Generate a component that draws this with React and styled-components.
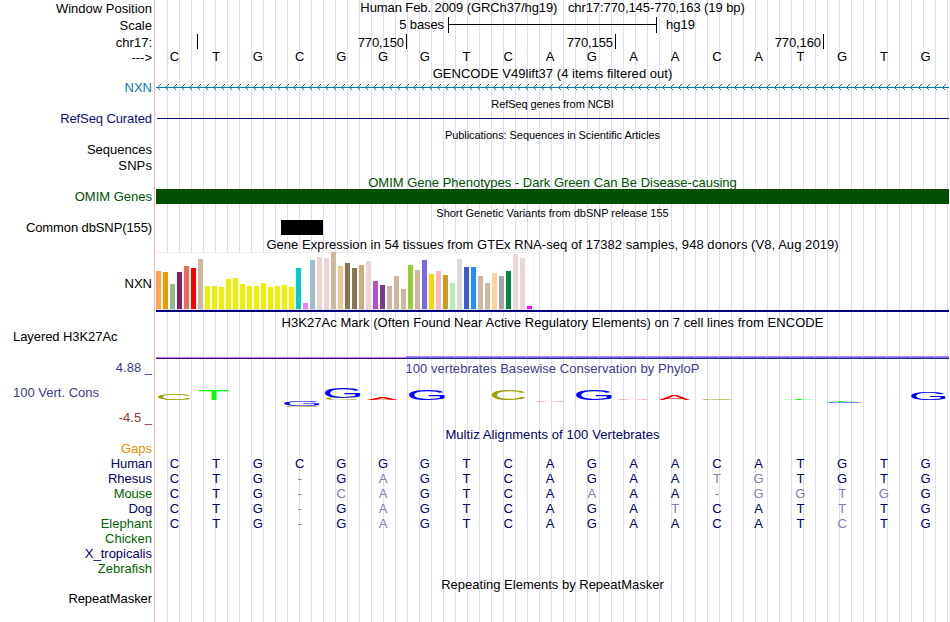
import React from 'react'
import styled, { createGlobalStyle } from 'styled-components'

const BASES = 'CTGCGGGTCAGAACATGTG'

const labels = [
  { text: 'Window Position', h: 17 },
  { text: 'Scale', h: 17 },
  { text: 'chr17:', h: 15 },
  { text: '--->', h: 30 },
  { text: 'NXN', h: 31, color: '#0c78b4' },
  { text: 'RefSeq Curated', h: 31, color: '#0c0c78', ls: -0.1 },
  { text: 'Sequences', h: 16 },
  { text: 'SNPs', h: 31, ls: 0.1 },
  { text: 'OMIM Genes', h: 31, color: '#005000' },
  { text: 'Common dbSNP(155)', h: 56, ls: -0.11 },
  { text: 'NXN', h: 53 },
  { text: 'Layered H3K27Ac', h: 31, left: true, ls: -0.07 },
  { text: '4.88 _', h: 25, color: '#3c3c8c' },
  { text: '100 Vert. Cons', h: 25, color: '#3c3c8c', left: true },
  { text: '-4.5 _', h: 31, color: '#8c3c3c' },
  { text: 'Gaps', h: 15, color: '#e68c00' },
  { text: 'Human', h: 15, color: '#000064', ls: -0.15 },
  { text: 'Rhesus', h: 15, color: '#000064' },
  { text: 'Mouse', h: 15, color: '#006400', ls: -0.15 },
  { text: 'Dog', h: 15, color: '#000064', ls: -0.15 },
  { text: 'Elephant', h: 15, color: '#006400' },
  { text: 'Chicken', h: 15, color: '#006400' },
  { text: 'X_tropicalis', h: 15, color: '#000064' },
  { text: 'Zebrafish', h: 30, color: '#006400' },
  { text: 'RepeatMasker', h: 31, ls: -0.08 },
]

const species = [
  BASES,
  'CTG-GAGTCAGAATGTGTG',
  'CTG-CAGTCAAAA-GGTGG',
  'CTG-GAGTCAGATCATTTG',
  'CTG-GAGTCAGAACATCTG',
]

const tissues = [
  [38, '#ffa54f'], [37, '#ee9a00'], [25, '#8fbc8f'], [37, '#8b1c62'], [43, '#ee6a50'],
  [41, '#ff0000'], [50, '#cdb79e'], [23, '#eeee00'], [23, '#eeee00'], [22, '#eeee00'],
  [30, '#eeee00'], [31, '#eeee00'], [25, '#eeee00'], [23, '#eeee00'], [23, '#eeee00'],
  [26, '#eeee00'], [22, '#eeee00'], [23, '#eeee00'], [24, '#eeee00'], [22, '#eeee00'],
  [41, '#00cdcd'], [6, '#ee82ee'], [49, '#9ac0cd'], [52, '#eed5d2'], [51, '#eed5d2'],
  [57, '#cdb79e'], [43, '#eec591'], [46, '#8b7355'], [41, '#8b7355'], [44, '#cdaa7d'],
  [48, '#eed5d2'], [28, '#b452cd'], [24, '#7a378b'], [23, '#cdb79e'], [33, '#cdb79e'],
  [20, '#cdb79e'], [44, '#9acd32'], [39, '#cdb79e'], [49, '#7a67ee'], [35, '#ffd700'],
  [38, '#ffb6c1'], [34, '#cd9b1d'], [26, '#b4eeb4'], [50, '#d9d9d9'], [42, '#3a5fcd'],
  [42, '#1e90ff'], [33, '#cdb79e'], [26, '#cdb79e'], [36, '#ffd39b'], [33, '#a6a6a6'],
  [38, '#008b45'], [55, '#eed5d2'], [51, '#eed5d2'], [3, '#ff00ff'],
]

// ink box of each letter at font-size 100: left, right, bottom overshoot, top
const INK = {
  A: [0.2, 66.5, 0, 68.8],
  C: [5, 67.7, 1, 69.8],
  G: [5, 70.5, 1, 69.8],
  T: [2.2, 58.9, 0, 68.8],
}
const LOGO_COLOR = { A: '#ff0000', C: '#a0a000', G: '#0000ff', T: '#00ff00' }

// letter, left, right, top, bottom inside the conservation track
const logo = [
  ['C', 2, 35, 17.5, 24],
  ['T', 43, 73, 14, 24],
  ['G', 128, 163, 25, 30],
  ['C', 128, 163, 30, 30.6],
  ['G', 169, 204, 12, 22],
  ['C', 170, 201, 22, 24],
  ['A', 211, 242, 21, 24],
  ['G', 253, 288.5, 14, 24],
  ['C', 336, 369, 14, 24],
  ['A', 378, 409, 25, 26],
  ['G', 420, 455.5, 14, 24],
  ['A', 461, 493, 23, 24],
  ['A', 503, 534, 19, 24],
  ['C', 546, 577, 23.3, 24],
  ['T', 628, 658, 23, 24],
  ['T', 670, 700, 25, 26],
  ['G', 671, 705, 26, 27],
  ['G', 755, 789, 16, 24],
]

const LogoLetter = ({ data }) => {
  const [ch, x0, x1, y0, y1] = data
  const [l, r, b, t] = INK[ch]
  const sx = (x1 - x0) / (r - l)
  const sy = (y1 - y0) / (t + b)
  return (
    <StLogoText
      fill={LOGO_COLOR[ch]}
      transform={`translate(${x0 - l * sx} ${y1 - b * sy}) scale(${sx} ${sy})`}
    >
      {ch}
    </StLogoText>
  )
}

const arrows = Array.from({ length: 99 }, (_, i) => {
  const x = Math.round(1 + i * 8.01)
  return `M${x + 3.5} 0.5L${x + 0.5} 3.5L${x + 3.5} 6.5`
}).join('')

const App = () => {
  return (
    <>
      <GlobalStyle />
      <StBrowser>
        <StLabels>
          {labels.map((l, i) => (
            <StLabel key={i} $h={l.h} $color={l.color} $left={l.left} $ls={l.ls}>
              {l.text}
            </StLabel>
          ))}
        </StLabels>
        <StTracks>
          <StTitle $h={17} $ls={-0.085}>
            Human Feb. 2009 (GRCh37/hg19) &nbsp; chr17:770,145-770,163 (19 bp)
          </StTitle>
          <StScale>
            <StScaleText>5 bases</StScaleText>
            <StScaleBar />
            <span>hg19</span>
          </StScale>
          <StRuler>
            <StTick $w={42} />
            <StTick $w={209}>770,150</StTick>
            <StTick $w={209}>770,155</StTick>
            <StTick $w={208}>770,160</StTick>
          </StRuler>
          <StBaseRow $h={17}>
            {BASES.split('').map((b, i) => (
              <StBase key={i}>{b}</StBase>
            ))}
          </StBaseRow>
          <StTitle $h={18} $ls={0.03}>GENCODE V49lift37 (4 items filtered out)</StTitle>
          <StGene width='793' height='7'>
            <path d='M0 3.5H793' />
            <path d={arrows} />
          </StGene>
          <StSmallTitle $h={20} $ls={-0.08}>RefSeq genes from NCBI</StSmallTitle>
          <StRefSeqLine />
          <StSmallTitle $h={46} $ls={-0.055}>
            Publications: Sequences in Scientific Articles
          </StSmallTitle>
          <StTitle $h={14} $color='#005000'>
            OMIM Gene Phenotypes - Dark Green Can Be Disease-causing
          </StTitle>
          <StOmimBar />
          <StSmallTitle $h={13} $ls={-0.02}>
            Short Genetic Variants from dbSNP release 155
          </StSmallTitle>
          <StSnp />
          <StTitle $h={15} $ls={0.055}>
            Gene Expression in 54 tissues from GTEx RNA-seq of 17382 samples, 948 donors (V8, Aug 2019)
          </StTitle>
          <StGtex>
            <StBars>
              {tissues.map(([h, c], i) => (
                <StBar key={i} $h={h} $c={c} />
              ))}
            </StBars>
          </StGtex>
          <StTitle $h={41} $ls={0.052}>
            H3K27Ac Mark (Often Found Near Active Regulatory Elements) on 7 cell lines from ENCODE
          </StTitle>
          <StSignal>
            <StSignalLow />
            <StSignalHigh />
          </StSignal>
          <StTitle $h={15} $color='#3c3c8c' $ls={0.04}>
            100 vertebrates Basewise Conservation by PhyloP
          </StTitle>
          <StLogo width='793' height='51'>
            {logo.map((d, i) => (
              <LogoLetter key={i} data={d} />
            ))}
          </StLogo>
          <StTitle $h={29} $color='#000064' $ls={0.09}>
            Multiz Alignments of 100 Vertebrates
          </StTitle>
          {species.map((row, n) => (
            <StBaseRow key={n} $h={15}>
              {row.split('').map((b, i) => (
                <StBase key={i} $color={b === BASES[i] ? '#000064' : '#8080b2'}>
                  {b}
                </StBase>
              ))}
            </StBaseRow>
          ))}
          <StRepeatTitle $h={15}>Repeating Elements by RepeatMasker</StRepeatTitle>
        </StTracks>
      </StBrowser>
    </>
  )
}

export default App

const GlobalStyle = createGlobalStyle`
  body {
    margin: 0;
    background: #fff;
    overflow: hidden;
  }
`

const StBrowser = styled.div`
  display: flex;
  width: 949px;
  height: 622px;
  overflow: hidden;
  color: #000;
  font-family: 'Liberation Sans', Arial, sans-serif;
  font-size: 13px;
  line-height: 15px;
  white-space: nowrap;
`

const StLabels = styled.div`
  box-sizing: border-box;
  width: 155px;
  flex: none;
  padding: 1px 2px 0 13px;
  border-right: 1px solid #ffb4b4;
`

const StLabel = styled.div`
  height: ${(p) => p.$h}px;
  color: ${(p) => p.$color || '#000'};
  letter-spacing: ${(p) => p.$ls || 0}px;
  text-align: ${(p) => (p.$left ? 'left' : 'right')};
`

const StTracks = styled.div`
  display: flex;
  flex-direction: column;
  width: 793px;
  flex: none;
  margin-left: 1px;
  background-image: linear-gradient(to right, #dcdcff 1px, transparent 1px);
  background-size: 12px 100%;
  background-position: 11px 0;
`

const StTitle = styled.div`
  height: ${(p) => p.$h}px;
  flex: none;
  color: ${(p) => p.$color || '#000'};
  letter-spacing: ${(p) => p.$ls || 0}px;
  text-align: center;
`

const StSmallTitle = styled(StTitle)`
  font-size: 11px;
  line-height: 13px;
`

const StRepeatTitle = styled(StTitle)`
  margin-top: 46px;
`

const StScale = styled.div`
  display: flex;
  height: 17px;
`

const StScaleText = styled.div`
  width: 288px;
  margin-right: 4px;
  letter-spacing: -0.1px;
  text-align: right;
`

const StScaleBar = styled.div`
  box-sizing: border-box;
  width: 209px;
  height: 16px;
  margin-right: 9px;
  border: solid #000;
  border-width: 0 1px;
  background: linear-gradient(#000, #000) 0 7px / 100% 1px no-repeat;
`

const StRuler = styled.div`
  display: flex;
  height: 15px;
`

const StTick = styled.div`
  box-sizing: border-box;
  width: ${(p) => p.$w}px;
  height: 15px;
  padding: 1px 2px 0 0;
  border-right: 1px solid #000;
  letter-spacing: -0.1px;
  text-align: right;
`

const StBaseRow = styled.div`
  display: grid;
  grid-template-columns: repeat(19, 1fr);
  height: ${(p) => p.$h}px;
  flex: none;
  margin-left: -2.5px;
  width: 793px;
`

const StBase = styled.span`
  color: ${(p) => p.$color || '#000'};
  text-align: center;
`

const StGene = styled.svg`
  display: block;
  margin-bottom: 7px;
  fill: none;
  stroke: #0c78b4;
  shape-rendering: crispEdges;
`

const StRefSeqLine = styled.div`
  height: 1px;
  margin: 0 0 10px 1px;
  background: #0c0c78;
`

const StOmimBar = styled.div`
  height: 15px;
  margin-bottom: 3px;
  background: #005000;
`

const StSnp = styled.div`
  width: 42px;
  height: 15px;
  margin: 0 0 2px 125px;
  background: #000;
`

const StGtex = styled.div`
  height: 60px;
  margin-bottom: 3px;
  box-sizing: border-box;
  border-bottom: 2px solid #00007d;
`

const StBars = styled.div`
  box-sizing: border-box;
  display: flex;
  align-items: flex-end;
  gap: 2px;
  width: 378px;
  height: 58px;
  border: solid #eee;
  border-width: 1px 1px 1px 0;
  border-bottom-color: #ddd;
  background: #fff;
`

const StBar = styled.div`
  width: 5px;
  height: ${(p) => p.$h}px;
  flex: none;
  background: ${(p) => p.$c};
`

const StSignal = styled.div`
  display: flex;
  align-items: flex-end;
  height: 3px;
  margin-bottom: 2px;
`

const StSignalLow = styled.div`
  width: 250px;
  height: 2px;
  background: linear-gradient(#c878ff 1px, #32145a 1px);
`

const StSignalHigh = styled.div`
  flex: 1;
  height: 3px;
  background: linear-gradient(#c07cff 1px, #6464f0 1px 2px, #28326e 2px);
`

const StLogo = styled.svg`
  display: block;
  flex: none;
`

const StLogoText = styled.text`
  font-family: 'Liberation Sans', Arial, sans-serif;
  font-size: 100px;
`
